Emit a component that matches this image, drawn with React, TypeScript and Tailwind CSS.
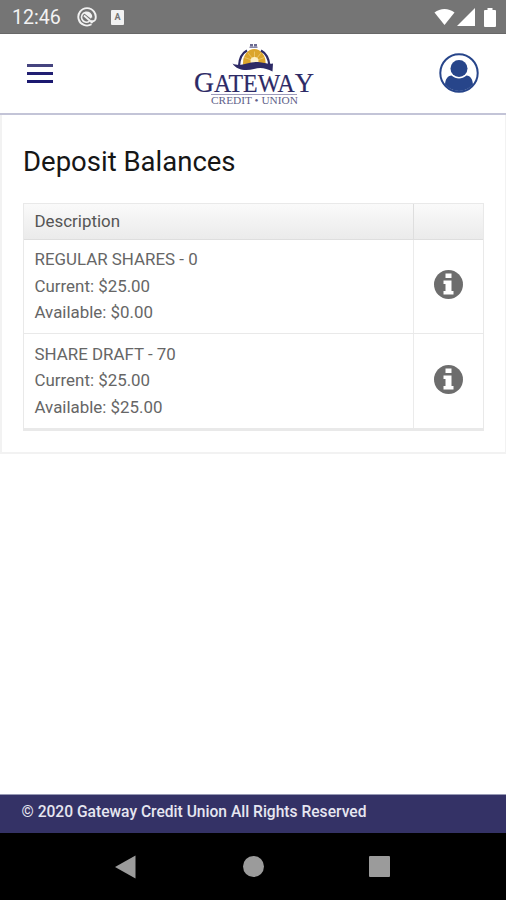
interface Account {
  name: string;
  current: string;
  available: string;
}

const accounts: Account[] = [
  { name: "REGULAR SHARES - 0", current: "$25.00", available: "$0.00" },
  { name: "SHARE DRAFT - 70", current: "$25.00", available: "$25.00" },
];

function StatusBar() {
  return (
    <div className="flex h-[34px] items-center bg-[#757575] pl-[12px] pr-[10px] text-white border-b border-[#686868]">
      <span className="w-[65px] pt-[3px] text-[19.6px] leading-none text-[#f2f2f2]">
        12:46
      </span>
      <svg width="20" height="20" viewBox="0 0 20 20" fill="none">
        <path
          d="M14.5 17.3A8.7 8.7 0 1 1 18.4 12.2C17.7 14.2 15.8 14.8 14 13.8"
          stroke="#f2f2f2"
          strokeWidth="1.9"
        />
        <path
          d="M12.5 14.2A5 5 0 1 1 14.5 10.5"
          stroke="#f2f2f2"
          strokeWidth="1.6"
        />
        <path d="M7 8.5 15.5 16" stroke="#f2f2f2" strokeWidth="1.8" />
        <path d="M7 6.2A4.6 4.6 0 0 1 14 11.8Z" fill="#f2f2f2" />
      </svg>
      <div className="ml-[14px] mt-[1px] flex h-[15px] w-[13px] items-center justify-center rounded-[1px] bg-[#f2f2f2] text-[9px] font-bold leading-none text-[#757575]">
        A
      </div>
      <div className="ml-auto flex items-center pt-[1px]">
        <svg width="21" height="18" viewBox="0 0 22 18" fill="#fff">
          <path d="M0.5 4.2C6.5-0.7 15.5-0.7 21.5 4.2L11 17.5Z" />
        </svg>
        <svg width="18" height="18" viewBox="0 0 18 18" fill="#fff" className="ml-[2px]">
          <path d="M18 0V18H0Z" />
        </svg>
        <svg width="12" height="19" viewBox="0 0 12 19" fill="#fff" className="ml-[9px]">
          <path d="M3.5 0H8.5V2H11Q12 2 12 3V18Q12 19 11 19H1Q0 19 0 18V3Q0 2 1 2H3.5Z" />
        </svg>
      </div>
    </div>
  );
}

function Logo() {
  return (
    <svg width="124" height="66" viewBox="0 0 124 66">
      {/* dome */}
      <rect x="59" y="3" width="3" height="2.5" fill="#6d6c92" />
      <rect x="63" y="3" width="3" height="2.5" fill="#6d6c92" />
      <path d="M58.5 6.2H66.5" stroke="#55537f" strokeWidth="1" />
      <path d="M52 22A11.3 14 0 0 1 74.6 22L75 27H51.5Z" fill="#dba52d" />
      <path
        d="M63.5 20V10.5M63.5 20 57 12M63.5 20 70 12M63.5 20 53.5 16.5M63.5 20 73.5 16.5"
        stroke="#f3d68c"
        strokeWidth="0.6"
      />
      <circle cx="63.5" cy="20" r="4" fill="#fdf0c8" />
      <path
        d="M56 9.5Q48.5 13.5 48 25M70 9.5Q77.5 13.5 78.5 25"
        stroke="#2d2a66"
        strokeWidth="2.2"
        fill="none"
      />
      <path
        d="M41.5 22.5C50 26.5 57 20.5 67 21C73 21.5 77 23.5 82 22.5L81.5 30.5C75 27 69 26 63 28C55 30 46 29.5 41.5 22.5Z"
        fill="#2d2a66"
      />
      {/* wordmark */}
      <text
        x="3"
        y="51"
        fill="#2d2a66"
        stroke="#2d2a66"
        strokeWidth="0.2"
        fontFamily="'Liberation Serif', serif"
        fontSize="25"
        textLength="120"
        lengthAdjust="spacingAndGlyphs"
      >
        <tspan fontSize="29">G</tspan>ATEWA<tspan fontSize="28">Y</tspan>
      </text>
      <path d="M20 53.5H106" stroke="#9d9abb" strokeWidth="1" />
      <text
        x="20"
        y="63"
        fontSize="9.5"
        fill="#625f89"
        fontFamily="'Liberation Serif', serif"
        textLength="87"
        lengthAdjust="spacingAndGlyphs"
      >
        CREDIT • UNION
      </text>
    </svg>
  );
}

function UserIcon() {
  return (
    <svg width="40" height="40" viewBox="0 0 40 40">
      <circle cx="20" cy="20" r="18.7" fill="#fff" stroke="#27458a" strokeWidth="2" />
      <circle cx="20" cy="15.5" r="8.5" fill="#27458a" />
      <path
        d="M6 31.5C6.5 26 8.5 23 12.5 22.5C17 26.5 23 26.5 27.5 22.5C31.5 23 33.5 26 34 31.5A18.5 18.5 0 0 1 6 31.5Z"
        fill="#27458a"
      />
    </svg>
  );
}

function InfoIcon() {
  return (
    <svg width="29" height="29" viewBox="0 0 29 29" className="-mt-[3px]">
      <circle cx="14.5" cy="14.5" r="14.5" fill="#6d6d6d" />
      <path
        d="M11.5 3.5H17.5V8H11.5ZM9.5 10.5H17.5V21H19.5V24.5H9.5V21H11.5V14H9.5Z"
        fill="#fff"
      />
    </svg>
  );
}

function Header() {
  return (
    <header className="flex h-[81px] items-start justify-between border-b-2 border-[#c3c4d7] bg-white pl-[27px] pr-[27px]">
      <div className="mt-[30px] flex w-[40px] flex-col gap-[5px]">
        <span className="h-[3px] w-[26px] bg-[#45447f]" />
        <span className="h-[2.5px] w-[26px] bg-[#211f72]" />
        <span className="h-[3px] w-[26px] bg-[#1b1870]" />
      </div>
      <div className="mt-[7px]">
        <Logo />
      </div>
      <div className="mt-[19px]">
        <UserIcon />
      </div>
    </header>
  );
}

function AccountRow({ account }: { account: Account }) {
  return (
    <div className="flex h-[94.5px] border-b border-[#e9e9e9]">
      <div className="w-[389.5px] border-r border-[#ebebeb] pl-[10.5px] pt-[6.5px] leading-[26.7px]">
        <p>{account.name}</p>
        <p>Current: {account.current}</p>
        <p>Available: {account.available}</p>
      </div>
      <div className="flex flex-1 items-center justify-center">
        <InfoIcon />
      </div>
    </div>
  );
}

export default function App() {
  return (
    <div className="flex h-[900px] w-[506px] flex-col bg-white font-['Roboto',sans-serif]">
      <StatusBar />
      <Header />
      <main className="flex-1">
        <section className="h-[339px] border-b-2 border-l-2 border-r border-[#f2f2f2] pl-[21px] pr-[21px]">
          <h1 className="pt-[28px] text-[27.5px] leading-[38px] text-[#161616]">
            Deposit Balances
          </h1>
          <div className="mt-[22px] border-x border-b-2 border-t border-[#e9e9e9] text-[16.9px] text-[#666]">
            <div className="flex h-[35.5px] border-b border-[#dedede] bg-linear-to-b from-[#fafafa] to-[#ebebeb] text-[#555]">
              <div className="w-[389.5px] border-r border-[#dedede] pl-[10.5px] leading-[35px]">
                Description
              </div>
            </div>
            {accounts.map((account) => (
              <AccountRow key={account.name} account={account} />
            ))}
          </div>
        </section>
      </main>
      <footer className="h-[39px] border-t border-[#9799b5] bg-[#343266] pl-[21.5px] text-[15.6px] font-medium leading-[34px] text-[#e6e6f0]">
        © 2020 Gateway Credit Union All Rights Reserved
      </footer>
      <nav className="flex h-[67px] items-center bg-black pl-[115px]">
        <svg width="21" height="24" viewBox="0 0 21 24" fill="#9b9b9b">
          <path d="M0 12 20.5 0.5V23.5Z" />
        </svg>
        <span className="ml-[107px] size-[21px] rounded-full bg-[#9b9b9b]" />
        <span className="ml-[105px] size-[21px] rounded-[1px] bg-[#9b9b9b]" />
      </nav>
    </div>
  );
}
